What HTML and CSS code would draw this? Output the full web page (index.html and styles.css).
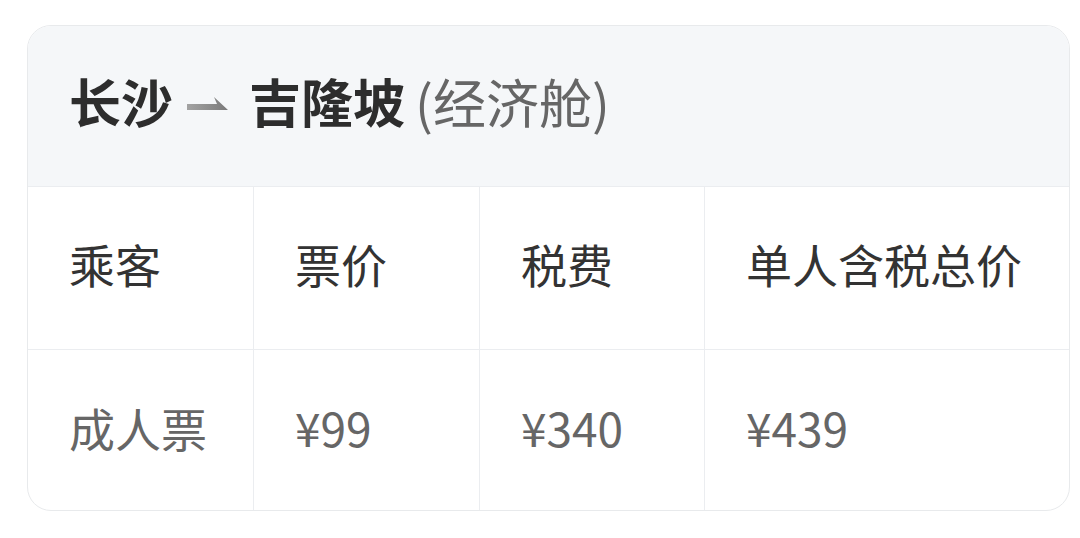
FILE: index.html
```html
<!DOCTYPE html>
<html lang="zh-CN">
<head>
<meta charset="utf-8">
<link rel="stylesheet" href="styles.css">
</head>
<body>
<div class="card">
  <div class="head">
    <span class="city">长沙</span>
    <svg class="arrow" width="42" height="16" viewBox="0 0 42 16">
      <defs>
        <linearGradient id="g" x1="0" x2="1" y1="0" y2="0">
          <stop offset="0" stop-color="#a3a3a3"/>
          <stop offset="1" stop-color="#7a7a7a"/>
        </linearGradient>
      </defs>
      <path d="M0 8 H30 L27 1 L41 14 H0 Z" fill="url(#g)"/>
    </svg>
    <span class="city">吉隆坡</span>
    <span class="cabin">(经济舱)</span>
  </div>
  <div class="grid">
    <div class="cell th">乘客</div>
    <div class="cell th">票价</div>
    <div class="cell th">税费</div>
    <div class="cell th">单人含税总价</div>
    <div class="cell td">成人票</div>
    <div class="cell td">¥99</div>
    <div class="cell td">¥340</div>
    <div class="cell td">¥439</div>
  </div>
</div>
</body>
</html>
```
FILE: styles.css
```css
html, body {
  margin: 0;
  padding: 0;
  background: #ffffff;
}
body {
  font-family: "Noto Sans CJK SC", "Noto Sans", sans-serif;
  padding: 25px 0 0 27px;
}
.card {
  width: 1043px;
  box-sizing: border-box;
  border: 1px solid #e8eaec;
  border-radius: 24px;
  overflow: hidden;
  background: #ffffff;
}
.head {
  height: 161px;
  box-sizing: border-box;
  padding-bottom: 10px;
  background: #f5f7f9;
  border-bottom: 1px solid #ebedf0;
  display: flex;
  align-items: center;
  padding-left: 41px;
  color: #2d2d2d;
}
.city {
  font-size: 52px;
  font-weight: 700;
  line-height: 1;
}
.arrow {
  margin: 6px 20px 0 14px;
}
.cabin {
  font-size: 53px;
  font-weight: 400;
  color: #666666;
  line-height: 1;
  margin-left: 10px;
}
.grid {
  display: grid;
  grid-template-columns: 225px 226px 225px 1fr;
  grid-template-rows: 163px 160px;
}
.cell {
  display: flex;
  align-items: center;
  padding-left: 41px;
  padding-bottom: 10px;
  font-size: 46px;
  line-height: 1;
  border-left: 1px solid #ebedf0;
}
.cell:nth-child(4n+1) {
  border-left: none;
}
.th {
  color: #333333;
  border-bottom: 1px solid #ebedf0;
}
.td {
  color: #666666;
  padding-bottom: 6px;
}
```
